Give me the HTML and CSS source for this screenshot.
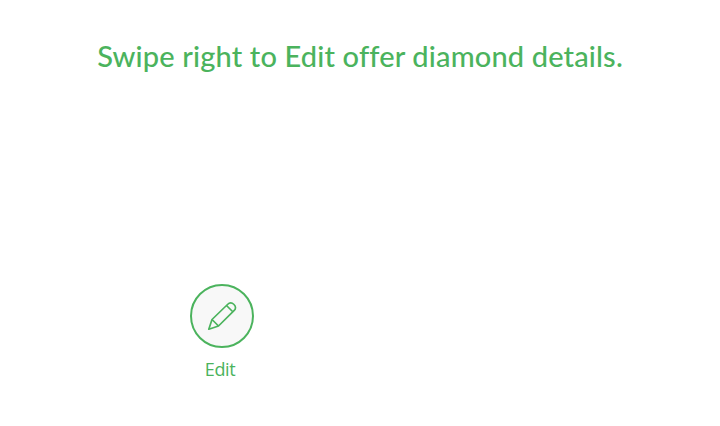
FILE: index.html
```html
<!DOCTYPE html>
<html lang="en">
<head>
<meta charset="utf-8">
<title>Edit offer</title>
<link rel="stylesheet" href="styles.css">
</head>
<body>
<main class="hint">
<h1 class="title">Swipe right to Edit offer diamond details.</h1>
<button class="action" type="button">
<span class="circle">
<svg class="pencil" viewBox="0 0 32 32"><path d="M2.8 29.2 L6 19.5 L21.5 4.5 C23.3 2.7 26 2.6 28 4.5 C30 6.5 30 8.9 28 10.7 L12.5 26 Z M6 19.5 L12.5 26 M20.5 5.5 L27 12"/></svg>
</span>
<span class="label">Edit</span>
</button>
</main>
</body>
</html>
```
FILE: styles.css
```css
body {
  margin: 0;
  background: #fff;
  color: #4bb35d;
  font-family: Lato, sans-serif;
}
.hint {
  height: 426px;
  display: flex;
  flex-direction: column;
}
.title {
  margin: 36px 0 0;
  text-align: center;
  font-size: 29px;
  line-height: 40px;
  font-weight: 500;
  letter-spacing: 0.15px;
  font-variant-ligatures: none;
  white-space: nowrap;
}
.action {
  margin: 208px 0 0 190px;
  padding: 0;
  border: 0;
  background: none;
  color: inherit;
  font: inherit;
  width: 64px;
  display: flex;
  flex-direction: column;
  align-items: center;
}
.circle {
  box-sizing: border-box;
  width: 64px;
  height: 64px;
  border: 2px solid #4bb35d;
  border-radius: 50%;
  background: #f8f8f8;
  display: grid;
  place-items: center;
}
.pencil {
  width: 32px;
  height: 32px;
  fill: none;
  stroke: #4bb35d;
  stroke-width: 1.7;
  stroke-linejoin: round;
}
.label {
  margin: 9px 4px 0 0;
  font-family: "Open Sans", "Noto Sans", sans-serif;
  font-size: 18px;
  line-height: 24px;
  letter-spacing: -0.4px;
}
```
